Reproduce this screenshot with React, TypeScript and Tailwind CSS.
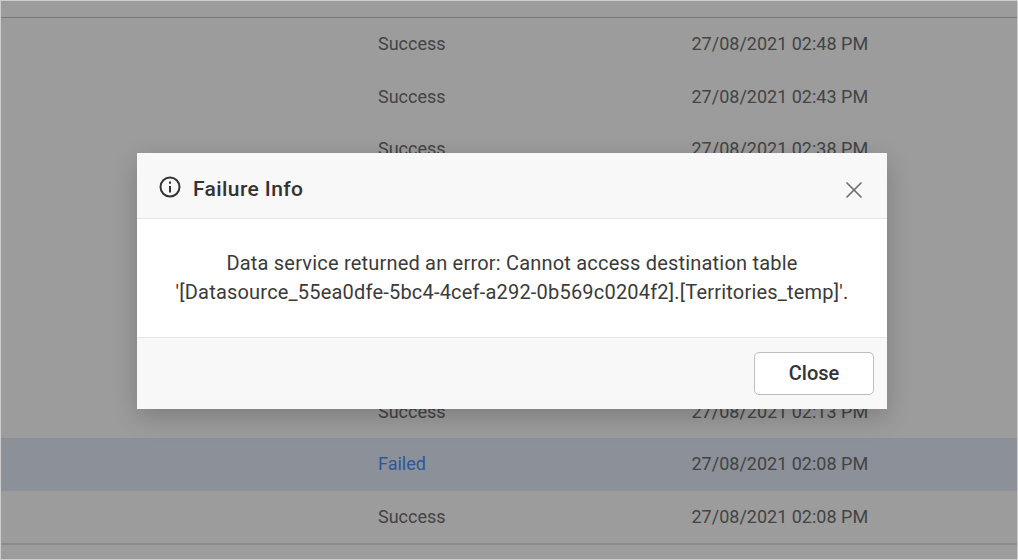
import { X } from 'lucide-react';

const rows = [
    { status: 'Success', time: '27/08/2021 02:48 PM' },
    { status: 'Success', time: '27/08/2021 02:43 PM' },
    { status: 'Success', time: '27/08/2021 02:38 PM' },
    { status: 'Success', time: '27/08/2021 02:33 PM' },
    { status: 'Success', time: '27/08/2021 02:28 PM' },
    { status: 'Success', time: '27/08/2021 02:23 PM' },
    { status: 'Success', time: '27/08/2021 02:18 PM' },
    { status: 'Success', time: '27/08/2021 02:13 PM' },
    { status: 'Failed', time: '27/08/2021 02:08 PM' },
    { status: 'Success', time: '27/08/2021 02:08 PM' },
];

export default function App() {
    return (
        <div className="h-[560px] w-[1018px] overflow-hidden border border-[#cdcdcd] bg-white font-['Roboto',sans-serif] text-[18px] text-[#6f6f6f]">
            <div className="relative h-full">
                {/* Table behind the dialog */}
                <div className="flex h-full flex-col">
                    <div className="h-4 shrink-0" />
                    <div className="flex flex-col border-t border-[#c4c4c4] border-b-2 border-b-[#e5e5e5]">
                        {rows.map((row) => (
                            <div
                                key={row.time + row.status}
                                className={`grid h-[52.5px] grid-cols-[377px_313.5px_1fr] items-center pb-[0.6px] ${row.status === 'Failed' ? 'bg-[#e3ebfb]' : ''}`}
                            >
                                <div />
                                <span className={row.status === 'Failed' ? 'text-[#4d8fff]' : ''}>{row.status}</span>
                                <span>{row.time}</span>
                            </div>
                        ))}
                    </div>
                </div>

                {/* Overlay and dialog */}
                <div className="absolute inset-0 flex items-center justify-center bg-black/39 pl-[6px] pt-px">
                    <div className="flex h-[256px] w-[750px] flex-col bg-white shadow-[0_8px_24px_rgba(0,0,0,0.2)]">
                        <div className="flex h-[66px] shrink-0 items-center border-b border-[#e5e5e5] bg-[#f8f8f8] pl-[22px] pr-[19px]">
                            <svg width="22" height="22" viewBox="0 0 22 22" fill="none" stroke="#333" strokeWidth="2" className="mt-1">
                                <circle cx="11" cy="11" r="9.5" />
                                <path d="M11 10v6.5" />
                                <path d="M11 5.5v2.2" />
                            </svg>
                            <span className="ml-3 mt-[10px] text-[21px] font-medium tracking-[0.4px] text-[#333]">Failure Info</span>
                            <button className="ml-auto mt-[10px] text-[#707070]">
                                <X size={28} strokeWidth={1.5} />
                            </button>
                        </div>
                        <div className="flex h-[119px] shrink-0 flex-col items-center justify-center border-b border-[#e5e5e5] text-center text-[20px] leading-[29px] tracking-[0.2px] text-[#3a3a3a]">
                            <p>Data service returned an error: Cannot access destination table</p>
                            <p>'[Datasource_55ea0dfe-5bc4-4cef-a292-0b569c0204f2].[Territories_temp]'.</p>
                        </div>
                        <div className="flex flex-1 items-center justify-end bg-[#f8f8f8] pr-[13px]">
                            <button className="h-[43px] w-[120px] rounded-[5px] border border-[#bdbdbd] bg-white text-[20px] font-medium text-[#333]">
                                Close
                            </button>
                        </div>
                    </div>
                </div>
            </div>
        </div>
    );
}
